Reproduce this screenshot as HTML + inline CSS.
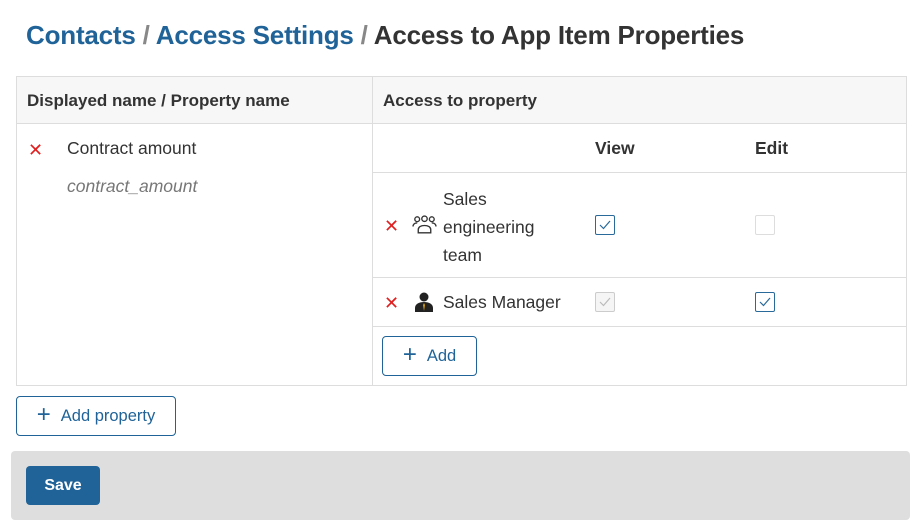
<!DOCTYPE html>
<html><head><style>
*{box-sizing:border-box;margin:0;padding:0}
body{width:919px;height:528px;background:#fff;font-family:"Liberation Sans",sans-serif;color:#333;position:relative;overflow:hidden}
.a{position:absolute}
.t{font-size:17.5px;white-space:nowrap}
.cb{position:absolute;width:20px;height:20px;border:1px solid #2a6a9a;border-radius:2px;background:#fff}
.cb svg{position:absolute;left:2px;top:2px}
.x{position:absolute;color:#e02020;font-size:18px}
.btn{position:absolute;border:1px solid #1f6398;border-radius:4px;color:#1f6398;font-size:16.5px;display:flex;align-items:center;justify-content:center;background:#fff}
</style></head><body>
<div class="a" style="left:26px;top:20px;font-size:26px;font-weight:bold;white-space:nowrap;letter-spacing:-0.2px"><span style="color:#1f6398">Contacts</span> <span style="color:#888">/</span> <span style="color:#1f6398">Access Settings</span> <span style="color:#888">/</span> <span style="color:#333">Access to App Item Properties</span></div>

<div class="a" style="left:16px;top:76px;width:891px;height:310px;border:1px solid #ddd"></div>
<div class="a" style="left:17px;top:77px;width:889px;height:47px;background:#f7f7f7;border-bottom:1px solid #ddd"></div>
<div class="a" style="left:372px;top:77px;width:1px;height:308px;background:#ddd"></div>
<div class="a" style="left:373px;top:172px;width:533px;height:1px;background:#ddd"></div>
<div class="a" style="left:373px;top:277px;width:533px;height:1px;background:#ddd"></div>
<div class="a" style="left:373px;top:326px;width:533px;height:1px;background:#ddd"></div>

<div class="a t" style="left:27px;top:91px;font-weight:bold;font-size:17px">Displayed name / Property name</div>
<div class="a t" style="left:383px;top:91px;font-weight:bold;font-size:17px">Access to property</div>

<div class="x" style="left:28px;top:140px">✕</div>
<div class="a t" style="left:67px;top:138px">Contract amount</div>
<div class="a t" style="left:67px;top:176px;font-style:italic;color:#777">contract_amount</div>

<div class="a t" style="left:595px;top:138px;font-weight:bold">View</div>
<div class="a t" style="left:755px;top:138px;font-weight:bold">Edit</div>

<div class="x" style="left:384px;top:216px">✕</div>
<svg class="a" style="left:412px;top:215px" width="25" height="21" viewBox="0 0 24 20" fill="none" stroke="#333" stroke-width="1.3"><circle cx="5" cy="4" r="2.3"/><circle cx="12" cy="3.5" r="2.6"/><circle cx="19" cy="4" r="2.3"/><path d="M1 11c0-2 1.5-3.5 4-3.5M23 11c0-2-1.5-3.5-4-3.5M6 17v-3c0-2.5 2.5-4 6-4s6 1.5 6 4v3z"/></svg>
<div class="a" style="left:443px;top:185px;font-size:17.5px;line-height:28px">Sales<br>engineering<br>team</div>
<div class="cb" style="left:595px;top:215px"><svg width="14" height="14"><path d="M2 7l3.5 3.5L12 3" stroke="#2a6a9a" stroke-width="1.2" fill="none"/></svg></div>
<div class="cb" style="left:755px;top:215px;border-color:#ddd"></div>

<div class="x" style="left:384px;top:293px">✕</div>
<svg class="a" style="left:414px;top:291px" width="20" height="21" viewBox="0 0 20 21"><circle cx="10" cy="6" r="4.5" fill="#222"/><path d="M1 21v-4c0-4 4-6 9-6s9 2 9 6v4z" fill="#222"/><path d="M10 12l-1 2 1 6 1-6z" fill="#d4a017"/></svg>
<div class="a t" style="left:443px;top:292px">Sales Manager</div>
<div class="cb" style="left:595px;top:292px;border-color:#ccc;background:#f5f5f5"><svg width="14" height="14"><path d="M2 7l3.5 3.5L12 3" stroke="#bbb" stroke-width="1.2" fill="none"/></svg></div>
<div class="cb" style="left:755px;top:292px"><svg width="14" height="14"><path d="M2 7l3.5 3.5L12 3" stroke="#2a6a9a" stroke-width="1.2" fill="none"/></svg></div>

<div class="btn" style="left:382px;top:336px;width:95px;height:40px"><span style="font-size:24px;font-weight:300;margin-right:10px;margin-top:-2px">+</span>Add</div>
<div class="btn" style="left:16px;top:396px;width:160px;height:40px"><span style="font-size:24px;font-weight:300;margin-right:10px;margin-top:-2px">+</span>Add property</div>

<div class="a" style="left:11px;top:451px;width:899px;height:69px;background:#dedede;border-radius:4px"></div>
<div class="a" style="left:26px;top:466px;width:74px;height:39px;background:#1f6398;border-radius:4px;color:#fff;font-size:16px;font-weight:bold;display:flex;align-items:center;justify-content:center">Save</div>
</body></html>
